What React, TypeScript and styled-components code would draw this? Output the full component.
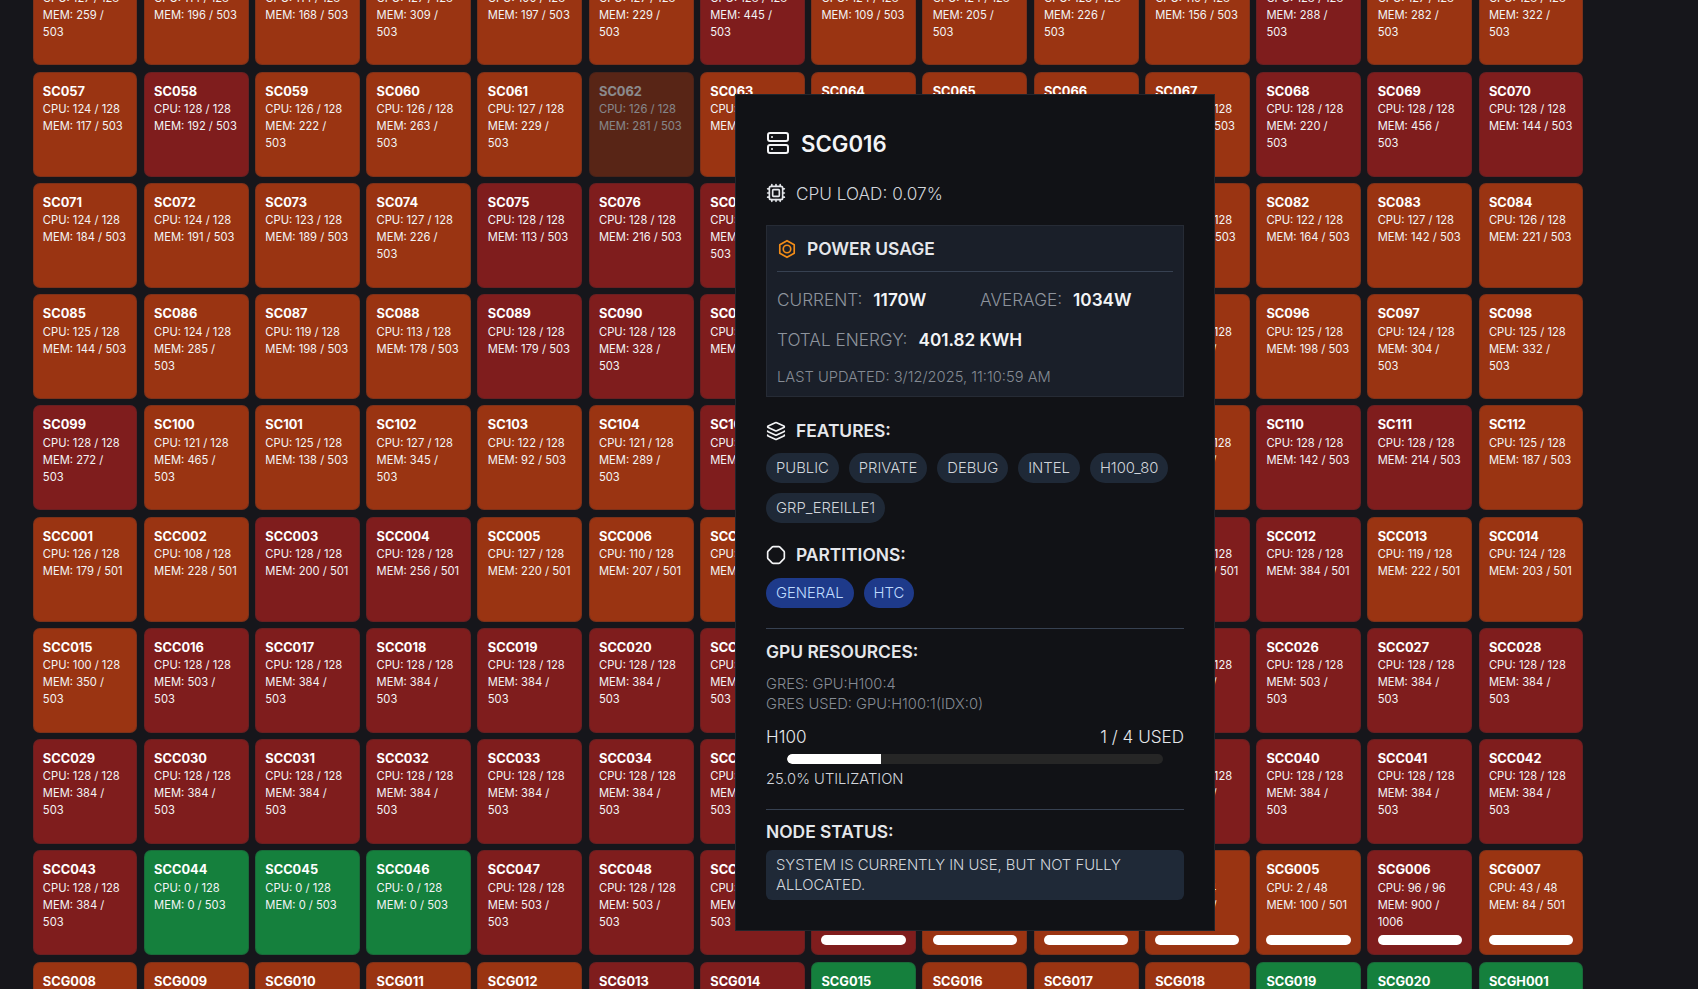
import React from "react";
import styled, { createGlobalStyle } from "styled-components";
import { Server, Cpu, Layers, Octagon } from "lucide-react";

const Global = createGlobalStyle`
  html, body { margin: 0; padding: 0; height: 100%; overflow: hidden; background: #16161b; }
  body { font-family: Inter, "Noto Sans", sans-serif; color: #fff; }
`;

const Page = styled.div`
  height: 989px;
  overflow: hidden;
  padding-left: 32.5px;
`;

const Grid = styled.div`
  width: 1551px;
  margin-top: -39.6px;
  display: grid;
  grid-template-columns: repeat(14, 1fr);
  gap: 6.3px;
`;

const tones = { o: "#9a3412", r: "#7f1d1d", g: "#15803d" };
type Tone = keyof typeof tones;

const Card = styled.div<{ $tone: Tone; $dim?: boolean }>`
  box-sizing: border-box;
  aspect-ratio: 1;
  display: flex;
  flex-direction: column;
  padding: 10px 9.35px 9.5px;
  border: 1px solid rgba(38, 38, 48, 0.25);
  border-radius: 7px;
  background: ${(p) => tones[p.$tone]};
  opacity: ${(p) => (p.$dim ? 0.5 : 1)};
  overflow: hidden;
`;

const CardName = styled.div`
  margin-bottom: 1.4px;
  font-size: 12.8px;
  line-height: 17px;
  font-weight: 700;
`;

const CardLine = styled.div<{ $tight?: boolean }>`
  padding-right: ${(p) => (p.$tight ? 4 : 0)}px;
  font-size: 11.2px;
  line-height: 17px;
  color: #f3f4f6;
`;

const CardBar = styled.div`
  flex: none;
  margin-top: auto;
  height: 10px;
  border-radius: 5px;
  background: #fff;
`;

const Popup = styled.div`
  position: fixed;
  left: 735px;
  top: 94px;
  box-sizing: border-box;
  width: 480px;
  height: 837px;
  padding: 30px;
  border: 1px solid #23252b;
  background: #111216;
`;

const TitleRow = styled.div`
  display: flex;
  align-items: center;
  gap: 11px;
  height: 36px;
  font-size: 22.2px;
  font-weight: 600;
  color: #f3f4f6;
`;

const CpuRow = styled.div`
  display: flex;
  align-items: center;
  gap: 10px;
  margin-top: 18px;
  height: 28px;
  font-size: 17.2px;
  font-weight: 300;
  color: #d1d5db;
`;

const PowerBox = styled.div`
  box-sizing: border-box;
  height: 172px;
  margin-top: 18px;
  padding: 7px 10px;
  border: 1px solid #262b35;
  background: #1a1f29;
`;

const PowerHead = styled.div`
  display: flex;
  align-items: center;
  gap: 10px;
  height: 31px;
  padding-bottom: 7px;
  border-bottom: 1px solid #374151;
  font-size: 17.4px;
  font-weight: 600;
  color: #e5e7eb;
`;

const StatRow = styled.div<{ $top: number }>`
  display: flex;
  align-items: center;
  height: 28px;
  margin-top: ${(p) => p.$top}px;
`;

const StatGroup = styled.div<{ $w?: number }>`
  display: flex;
  align-items: center;
  gap: 11px;
  width: ${(p) => (p.$w ? `${p.$w}px` : "auto")};
`;

const StatLabel = styled.span`
  font-size: 17.2px;
  font-weight: 300;
  color: #8d939c;
`;

const StatValue = styled.span`
  font-size: 17.2px;
  font-weight: 600;
  color: #f3f4f6;
`;

const Updated = styled.div`
  margin-top: 13.5px;
  font-size: 14.7px;
  line-height: 20px;
  font-weight: 300;
  color: #858b94;
`;

const SectionHead = styled.div<{ $top: number }>`
  display: flex;
  align-items: center;
  gap: 10px;
  height: 28px;
  margin-top: ${(p) => p.$top}px;
  padding-bottom: 1px;
  box-sizing: border-box;
  font-size: 17.4px;
  font-weight: 600;
  color: #e5e7eb;
`;

const Pills = styled.div<{ $top: number }>`
  display: flex;
  flex-wrap: wrap;
  gap: 10px;
  margin-top: ${(p) => p.$top}px;
`;

const Pill = styled.span<{ $blue?: boolean }>`
  display: inline-flex;
  align-items: center;
  height: 30px;
  padding: 0 10px;
  border-radius: 15px;
  font-size: 14.8px;
  font-weight: 300;
  background: ${(p) => (p.$blue ? "#1e3a8a" : "#1f2937")};
  color: ${(p) => (p.$blue ? "#bfdbfe" : "#d1d5db")};
`;

const Rule = styled.div<{ $top: number }>`
  height: 1px;
  margin-top: ${(p) => p.$top}px;
  background: #374151;
`;

const GresLines = styled.div`
  margin-top: 8px;
  font-size: 14.7px;
  line-height: 20px;
  font-weight: 300;
  color: #858b94;
`;

const GpuRow = styled.div`
  display: flex;
  justify-content: space-between;
  margin-top: 10px;
  font-size: 17.1px;
  line-height: 26px;
  font-weight: 300;
  color: #e5e7eb;
`;

const Track = styled.div`
  width: 90%;
  height: 10px;
  margin: 4px auto 0;
  border-radius: 5px;
  background: #262626;
  overflow: hidden;
`;

const Fill = styled.div`
  height: 100%;
  border-radius: 5px 0 0 5px;
  background: #fff;
`;

const Util = styled.div`
  margin-top: 5px;
  font-size: 14.7px;
  line-height: 20px;
  font-weight: 300;
  color: #d1d5db;
`;

const StatusBox = styled.div`
  box-sizing: border-box;
  height: 50px;
  margin-top: 4px;
  padding: 5px 10px;
  border-radius: 6px;
  background: #1f2937;
  font-size: 14.8px;
  line-height: 20px;
  font-weight: 300;
  color: #d1d5db;
`;

// name, cpu, cpuTotal, mem, memTotal, tone, bar
type Node = [string, number, number, number, number, Tone, boolean?];

const sc = (n: number) => `SC${String(n).padStart(3, "0")}`;
const scc = (n: number) => `SCC${String(n).padStart(3, "0")}`;
const scg = (n: number) => `SCG${String(n).padStart(3, "0")}`;

const row = (
  names: string[],
  cpus: number[],
  mems: number[],
  memTotal: number,
  toneText: string,
): Node[] =>
  names.map((name, i) => [name, cpus[i], 128, mems[i], memTotal, toneText[i] as Tone]);

const seq = (f: (n: number) => string, from: number) =>
  Array.from({ length: 14 }, (_, i) => f(from + i));

const nodes: Node[] = [
  ...row(seq(sc, 43),
    [127, 114, 114, 127, 100, 127, 128, 124, 124, 123, 119, 128, 127, 128],
    [259, 196, 168, 309, 197, 229, 445, 109, 205, 226, 156, 288, 282, 322], 503, "oooooorooooroo"),
  ...row(seq(sc, 57),
    [124, 128, 126, 126, 127, 126, 124, 125, 126, 124, 124, 128, 128, 128],
    [117, 192, 222, 263, 229, 281, 210, 190, 205, 211, 117, 220, 456, 144], 503, "orooooooooorrr"),
  ...row(seq(sc, 71),
    [124, 124, 123, 127, 128, 128, 128, 126, 127, 125, 124, 122, 127, 126],
    [184, 191, 189, 226, 113, 216, 240, 180, 200, 190, 191, 164, 142, 221], 503, "oooorrrooooooo"),
  ...row(seq(sc, 85),
    [125, 124, 119, 113, 128, 128, 128, 124, 120, 126, 125, 125, 124, 125],
    [144, 285, 198, 178, 179, 328, 310, 200, 210, 220, 290, 198, 304, 332], 503, "oooorrrooooooo"),
  ...row(seq(sc, 99),
    [128, 121, 125, 127, 122, 121, 128, 125, 124, 126, 127, 128, 128, 125],
    [272, 465, 138, 345, 92, 289, 170, 200, 180, 210, 260, 142, 214, 187], 503, "roooooroooorro"),
  ...row(seq(scc, 1),
    [126, 108, 128, 128, 127, 110, 126, 128, 128, 128, 128, 128, 119, 124],
    [179, 228, 200, 256, 220, 207, 190, 384, 384, 384, 384, 384, 222, 203], 501, "oorrooorrrrroo"),
  ...row(seq(scc, 15),
    [100, 128, 128, 128, 128, 128, 128, 128, 128, 128, 128, 128, 128, 128],
    [350, 503, 384, 384, 384, 384, 384, 384, 384, 384, 384, 503, 384, 384], 503, "orrrrrrrrrrrrr"),
  ...row(seq(scc, 29),
    [128, 128, 128, 128, 128, 128, 128, 128, 128, 128, 128, 128, 128, 128],
    [384, 384, 384, 384, 384, 384, 384, 384, 384, 384, 384, 384, 384, 384], 503, "rrrrrrrrrrrrrr"),
  [scc(43), 128, 128, 384, 503, "r"],
  [scc(44), 0, 128, 0, 503, "g"],
  [scc(45), 0, 128, 0, 503, "g"],
  [scc(46), 0, 128, 0, 503, "g"],
  [scc(47), 128, 128, 503, 503, "r"],
  [scc(48), 128, 128, 503, 503, "r"],
  [scc(49), 128, 128, 503, 503, "r"],
  [scg(1), 48, 48, 300, 501, "r", true],
  [scg(2), 24, 48, 200, 501, "o", true],
  [scg(3), 32, 48, 240, 501, "o", true],
  [scg(4), 2, 64, 300, 1006, "o", true],
  [scg(5), 2, 48, 100, 501, "o", true],
  [scg(6), 96, 96, 900, 1006, "r", true],
  [scg(7), 43, 48, 84, 501, "o", true],
  ...row(
    [...[8, 9, 10, 11, 12, 13, 14, 15, 16, 17, 18, 19, 20].map(scg), "SCGH001"],
    Array(14).fill(0),
    Array(14).fill(0),
    501,
    "ooooorrgoooggg",
  ),
];

const PowerIcon = () => (
  <svg width="20" height="20" viewBox="0 0 24 24" fill="none" stroke="#f28c18" strokeWidth="2" strokeLinecap="round" strokeLinejoin="round">
    <path d="M12 2l8.66 5v10L12 22l-8.66-5V7z" />
    <circle cx="12" cy="12" r="4.5" />
  </svg>
);

export default function App() {
  return (
    <>
      <Global />
      <Page>
        <Grid>
          {nodes.map(([name, cpu, cpuT, mem, memT, tone, bar]) => (
            <Card key={name} $tone={tone} $dim={name === "SC062"}>
              <CardName>{name}</CardName>
              <CardLine>CPU: {cpu} / {cpuT}</CardLine>
              <CardLine $tight={name === "SC099"}>MEM: {mem} / {memT}</CardLine>
              {bar && <CardBar />}
            </Card>
          ))}
        </Grid>
      </Page>
      <Popup>
        <TitleRow>
          <Server size={24} color="#f3f4f6" strokeWidth={2} />
          SCG016
        </TitleRow>
        <CpuRow>
          <Cpu size={20} color="#e5e7eb" strokeWidth={2} />
          CPU LOAD: 0.07%
        </CpuRow>
        <PowerBox>
          <PowerHead>
            <PowerIcon />
            POWER USAGE
          </PowerHead>
          <StatRow $top={13}>
            <StatGroup $w={203}>
              <StatLabel>CURRENT:</StatLabel>
              <StatValue>1170W</StatValue>
            </StatGroup>
            <StatGroup>
              <StatLabel>AVERAGE:</StatLabel>
              <StatValue>1034W</StatValue>
            </StatGroup>
          </StatRow>
          <StatRow $top={12}>
            <StatGroup>
              <StatLabel>TOTAL ENERGY:</StatLabel>
              <StatValue>401.82 KWH</StatValue>
            </StatGroup>
          </StatRow>
          <Updated>LAST UPDATED: 3/12/2025, 11:10:59 AM</Updated>
        </PowerBox>
        <SectionHead $top={20}>
          <Layers size={20} color="#f3f4f6" strokeWidth={2} />
          FEATURES:
        </SectionHead>
        <Pills $top={8}>
          <Pill>PUBLIC</Pill>
          <Pill>PRIVATE</Pill>
          <Pill>DEBUG</Pill>
          <Pill>INTEL</Pill>
          <Pill>H100_80</Pill>
          <Pill>GRP_EREILLE1</Pill>
        </Pills>
        <SectionHead $top={18}>
          <Octagon size={20} color="#f3f4f6" strokeWidth={2} />
          PARTITIONS:
        </SectionHead>
        <Pills $top={9}>
          <Pill $blue>GENERAL</Pill>
          <Pill $blue>HTC</Pill>
        </Pills>
        <Rule $top={20} />
        <SectionHead $top={9}>GPU RESOURCES:</SectionHead>
        <GresLines>
          GRES: GPU:H100:4
          <br />
          GRES USED: GPU:H100:1(IDX:0)
        </GresLines>
        <GpuRow>
          <span>H100</span>
          <span>1 / 4 USED</span>
        </GpuRow>
        <Track>
          <Fill style={{ width: "25%" }} />
        </Track>
        <Util>25.0% UTILIZATION</Util>
        <Rule $top={20} />
        <SectionHead $top={8}>NODE STATUS:</SectionHead>
        <StatusBox>SYSTEM IS CURRENTLY IN USE, BUT NOT FULLY ALLOCATED.</StatusBox>
      </Popup>
    </>
  );
}
